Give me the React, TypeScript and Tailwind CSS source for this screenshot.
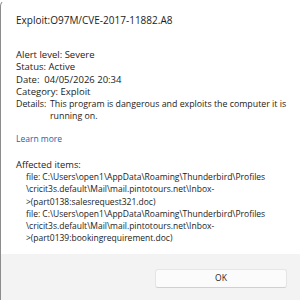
export default function App() {
  return (
    <div className="flex h-[300px] w-[300px] flex-col overflow-hidden rounded-tl-[6px] border-l border-t border-l-[#8c8c8c] border-t-white bg-white text-[8.5px] leading-[12.2px] text-[#1b1b1b] [font-family:'Open_Sans',sans-serif]">
      <div className="flex-1 pl-[15px] pr-[10px] pt-[13px]">
        <div className="text-[10px]">Exploit:O97M/CVE-2017-11882.A8</div>

        <div className="mt-[23px] text-[9.5px]">
          <div>Alert level: Severe</div>
          <div>Status: Active</div>
          <div>Date:&nbsp; 04/05/2026 20:34</div>
          <div>Category: Exploit</div>
          <div className="flex text-[8.8px]">
            <span className="w-[34px] shrink-0">Details:</span>
            <span>This program is dangerous and exploits the computer it is running on.</span>
          </div>
        </div>

        <a href="#" className="mt-[11px] block text-[#1f5fae]">
          Learn more
        </a>

        <div className="mt-[13.3px]">
          <div className="text-[9.3px]">Affected items:</div>
          <div className="pl-[10px]">
            file: C:\Users\open1\AppData\Roaming\Thunderbird\Profiles
            <br />
            \cricit3s.default\Mail\mail.pintotours.net\Inbox-
            <br />
            &gt;(part0138:salesrequest321.doc)
          </div>
          <div className="pl-[10px]">
            file: C:\Users\open1\AppData\Roaming\Thunderbird\Profiles
            <br />
            \cricit3s.default\Mail\mail.pintotours.net\Inbox-
            <br />
            &gt;(part0139:bookingrequirement.doc)
          </div>
        </div>
      </div>

      <div className="flex h-[46px] shrink-0 items-start justify-end bg-[#f3f3f3] pr-[13px] pt-[15px]">
        <button className="h-[19px] w-[132px] rounded-[3px] border border-[#e5e5e5] border-b-[#d0d0d0] bg-[#fbfbfb] text-[8.5px] text-[#1b1b1b]">
          OK
        </button>
      </div>
    </div>
  );
}
